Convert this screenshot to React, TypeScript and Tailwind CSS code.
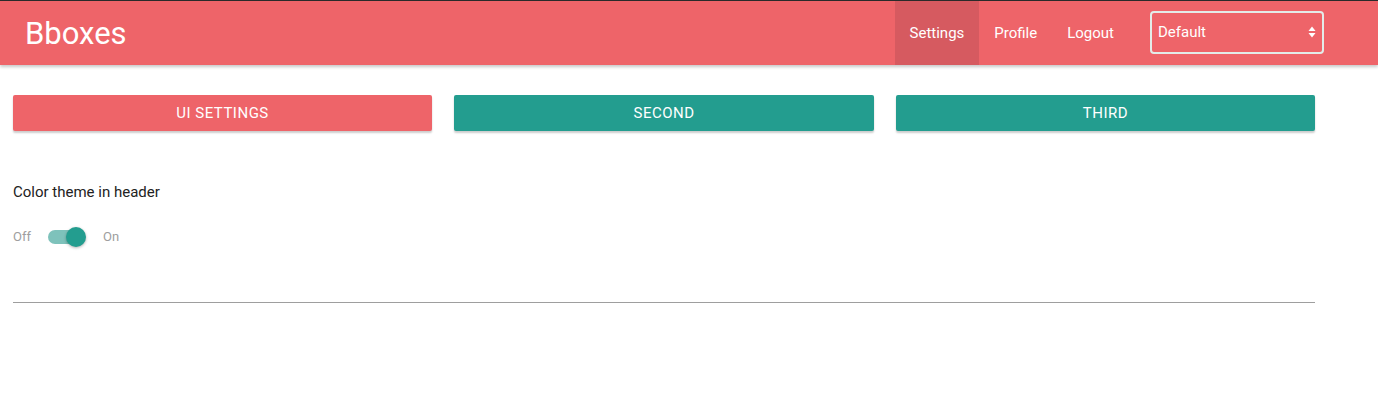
import React from "react";

export default function App() {
  return (
    <div className="min-h-[404px] bg-white" style={{ fontFamily: "Roboto, 'Liberation Sans', sans-serif" }}>
      <div className="h-px bg-[#2b2b2b]" />
      <header className="flex h-16 items-center bg-[#ee6469] pl-[25px] pr-[54px] text-white shadow-[0_2px_3px_rgba(0,0,0,0.22)] relative z-10">
        <div className="text-[31px] leading-none tracking-[0px]">Bboxes</div>
        <nav className="ml-auto flex h-full items-center text-[15px]">
          <a className="flex h-full items-center bg-[#d65a60] pl-[15px] pr-[15px] ml-[1px]">Settings</a>
          <a className="flex h-full items-center px-[15px]">Profile</a>
          <a className="flex h-full items-center px-[15px]">Logout</a>
          <div className="ml-[21px] mb-[2px] flex h-[43px] w-[174px] items-center justify-between rounded-[4px] border-2 border-[#e3ece9] pl-[6px] pr-[6px] text-[15px]">
            <span>Default</span>
            <svg width="8" height="12" viewBox="0 0 8 12">
              <path d="M4 0.5 L7.5 5 H0.5 Z" fill="white" />
              <path d="M4 11.5 L7.5 7 H0.5 Z" fill="white" />
            </svg>
          </div>
        </nav>
      </header>
      <main className="w-[1302px] ml-[13px]">
        <div className="mt-[30px] flex gap-[22px]">
          <button className="h-9 w-[419px] rounded-[2px] bg-[#ee6469] text-[15px] font-normal tracking-[0.5px] text-white shadow-[0_2px_2px_rgba(0,0,0,0.2)]">UI SETTINGS</button>
          <button className="h-9 w-[420px] rounded-[2px] bg-[#239d8f] text-[15px] font-normal tracking-[0.5px] text-white shadow-[0_2px_2px_rgba(0,0,0,0.2)]">SECOND</button>
          <button className="h-9 w-[419px] rounded-[2px] bg-[#239d8f] text-[15px] font-normal tracking-[0.5px] text-white shadow-[0_2px_2px_rgba(0,0,0,0.2)]">THIRD</button>
        </div>
        <div className="mt-[51px] text-[15px] leading-5 text-[#222]">Color theme in header</div>
        <div className="mt-[25px] flex items-center text-[13px] text-[#9e9e9e]">
          <span>Off</span>
          <div className="relative ml-[17px] mr-[17px] h-[20px] w-[38px] flex items-center">
            <div className="h-[14px] w-[36px] rounded-full bg-[#7ec2bb]" />
            <div className="absolute left-[18px] top-0 h-5 w-5 rounded-full bg-[#239d8f] shadow-[0_1px_3px_rgba(0,0,0,0.3)]" />
          </div>
          <span>On</span>
        </div>
        <div className="mt-[55px] h-px bg-[#9e9e9e]" />
      </main>
    </div>
  );
}
